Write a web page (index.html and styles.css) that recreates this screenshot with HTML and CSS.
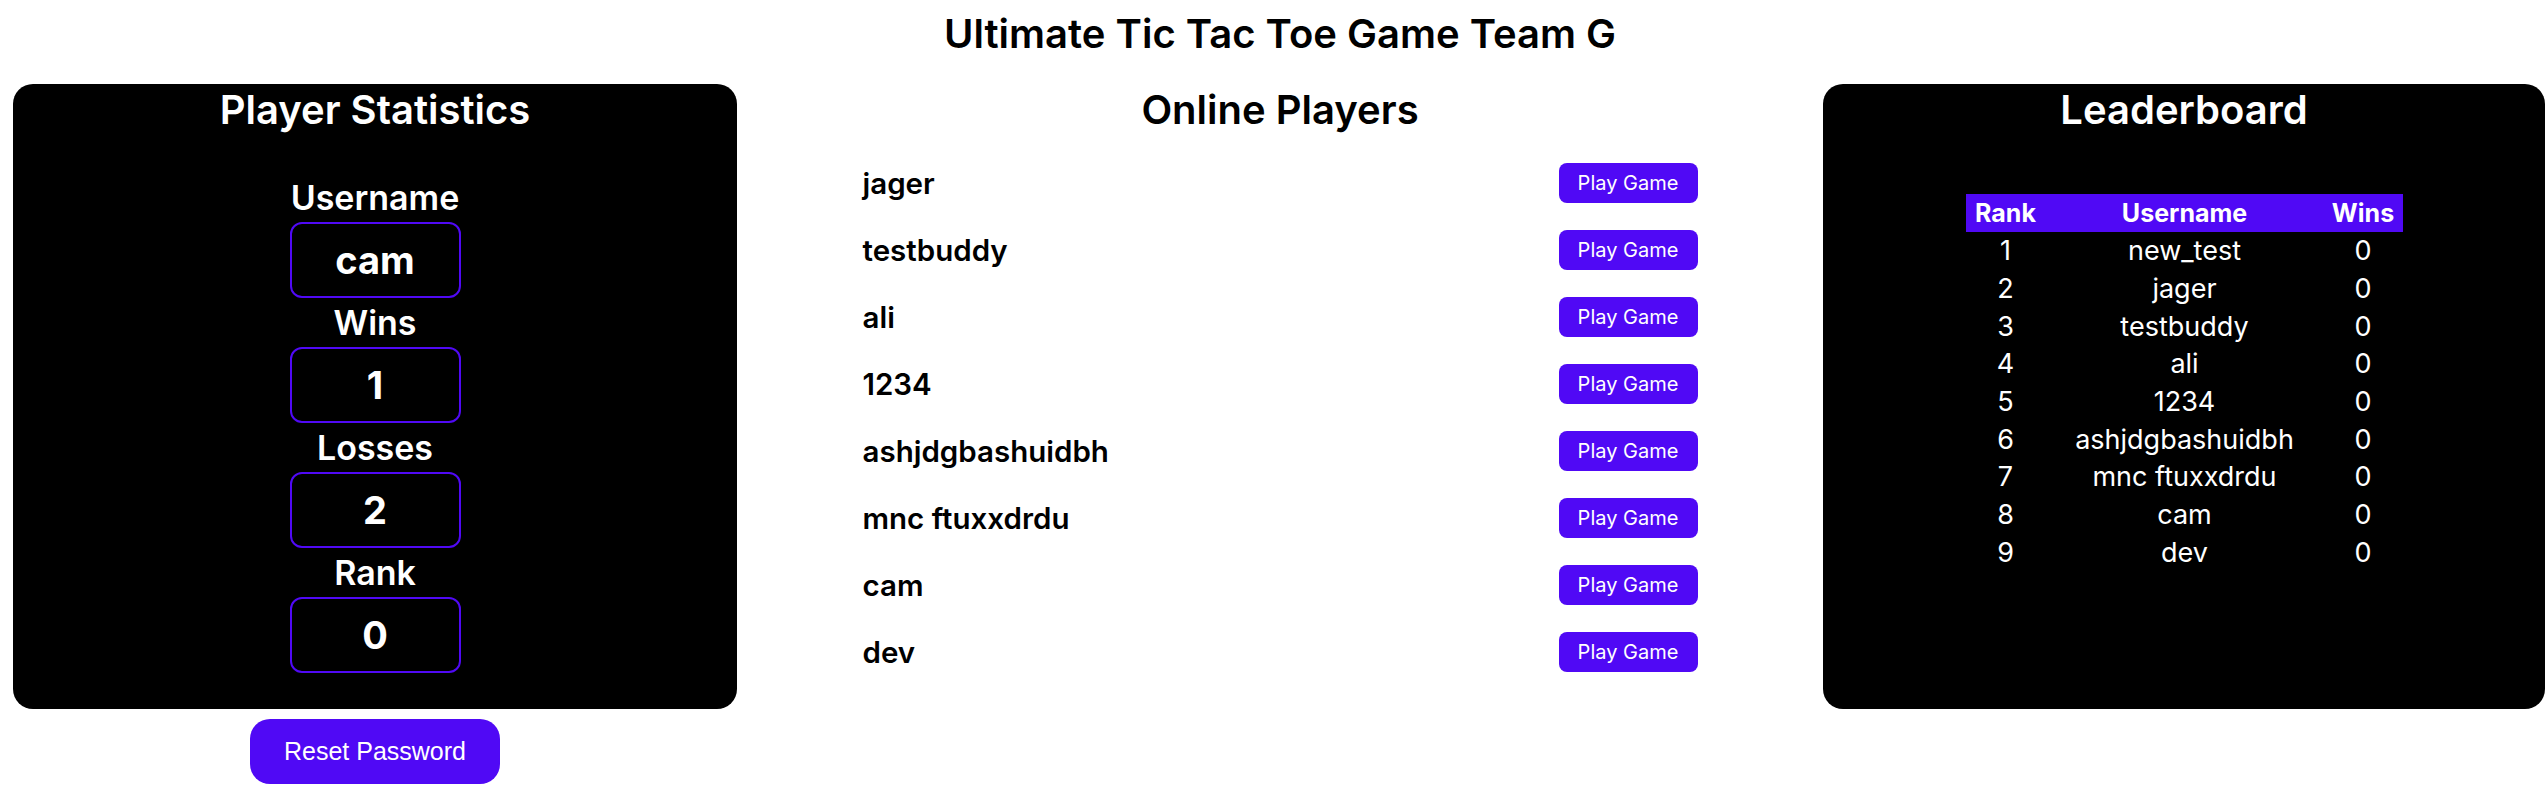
FILE: index.html
```html
<!DOCTYPE html>
<html lang="en">
<head>
<meta charset="utf-8">
<title>Ultimate Tic Tac Toe Game Team G</title>
<link rel="stylesheet" href="styles.css">
</head>
<body>
<h1 class="title">Ultimate Tic Tac Toe Game Team G</h1>
<main class="layout">
  <section class="panel stats">
    <h2 class="panel-title">Player Statistics</h2>
    <div class="stat-list">
      <div class="stat-label">Username</div>
      <div class="stat-box">cam</div>
      <div class="stat-label">Wins</div>
      <div class="stat-box">1</div>
      <div class="stat-label">Losses</div>
      <div class="stat-box">2</div>
      <div class="stat-label">Rank</div>
      <div class="stat-box">0</div>
    </div>
  </section>

  <section class="online">
    <h2 class="panel-title dark">Online Players</h2>
    <ul class="player-list">
      <li class="player-row"><span class="player-name">jager</span><button class="play-btn">Play Game</button></li>
      <li class="player-row"><span class="player-name">testbuddy</span><button class="play-btn">Play Game</button></li>
      <li class="player-row"><span class="player-name">ali</span><button class="play-btn">Play Game</button></li>
      <li class="player-row"><span class="player-name">1234</span><button class="play-btn">Play Game</button></li>
      <li class="player-row"><span class="player-name">ashjdgbashuidbh</span><button class="play-btn">Play Game</button></li>
      <li class="player-row"><span class="player-name">mnc ftuxxdrdu</span><button class="play-btn">Play Game</button></li>
      <li class="player-row"><span class="player-name">cam</span><button class="play-btn">Play Game</button></li>
      <li class="player-row"><span class="player-name">dev</span><button class="play-btn">Play Game</button></li>
    </ul>
  </section>

  <section class="panel leaderboard">
    <h2 class="panel-title">Leaderboard</h2>
    <table class="board">
      <thead>
        <tr><th class="c-rank">Rank</th><th class="c-user">Username</th><th class="c-wins">Wins</th></tr>
      </thead>
      <tbody>
        <tr><td>1</td><td>new_test</td><td>0</td></tr>
        <tr><td>2</td><td>jager</td><td>0</td></tr>
        <tr><td>3</td><td>testbuddy</td><td>0</td></tr>
        <tr><td>4</td><td>ali</td><td>0</td></tr>
        <tr><td>5</td><td>1234</td><td>0</td></tr>
        <tr><td>6</td><td>ashjdgbashuidbh</td><td>0</td></tr>
        <tr><td>7</td><td>mnc ftuxxdrdu</td><td>0</td></tr>
        <tr><td>8</td><td>cam</td><td>0</td></tr>
        <tr><td>9</td><td>dev</td><td>0</td></tr>
      </tbody>
    </table>
  </section>

  <button class="reset-btn">Reset Password</button>
</main>
</body>
</html>
```
FILE: styles.css
```css
* { box-sizing: border-box; }

body {
  margin: 0;
  background: #ffffff;
  color: #000000;
  font-family: Inter, "DejaVu Sans", sans-serif;
}

.title {
  margin: 10px 0 0;
  padding-left: 15px;
  font-size: 40px;
  line-height: 48px;
  font-weight: 600;
  text-align: center;
}

.layout {
  display: grid;
  grid-template-columns: 724px 835px 722px;
  grid-template-rows: auto auto;
  column-gap: 125.5px;
  padding-left: 13px;
  margin-top: 26px;
}

.panel {
  background: #000000;
  color: #ffffff;
  border-radius: 20px;
  padding-top: 2px;
  display: flex;
  flex-direction: column;
  align-items: center;
}

.stats { grid-column: 1; grid-row: 1; padding-bottom: 36px; }
.online { grid-column: 2; grid-row: 1; padding-top: 2px; }
.leaderboard { grid-column: 3; grid-row: 1; }

.panel-title {
  margin: 0;
  font-size: 40px;
  line-height: 48px;
  font-weight: 600;
  text-align: center;
}

.panel-title.dark { color: #000000; }

.stat-list {
  margin-top: 46px;
  display: flex;
  flex-direction: column;
  align-items: center;
}

.stat-label {
  font-size: 34px;
  line-height: 36px;
  font-weight: 600;
  margin-bottom: 6px;
}

.stat-box {
  width: 171px;
  height: 76px;
  border: 2px solid #5009f5;
  border-radius: 12px;
  display: flex;
  align-items: center;
  justify-content: center;
  font-size: 38px;
  font-weight: 700;
  margin-bottom: 7px;
}

.stat-box:last-child { margin-bottom: 0; }

.player-list {
  list-style: none;
  margin: 29px 0 0;
  padding: 0;
  display: flex;
  flex-direction: column;
  gap: 27px;
}

.player-row {
  display: flex;
  align-items: center;
  justify-content: space-between;
  height: 40px;
}

.player-name {
  font-size: 29.5px;
  font-weight: 600;
}

.play-btn {
  width: 139px;
  height: 40px;
  border: none;
  border-radius: 8px;
  background: #5009f5;
  color: #ffffff;
  font-family: Inter, "DejaVu Sans", sans-serif;
  font-size: 20px;
  font-weight: 400;
  padding: 0;
}

.board {
  margin-top: 60px;
  border-collapse: collapse;
  width: 437px;
  table-layout: fixed;
  font-size: 25px;
}

.board th {
  background: #5009f5;
  height: 38px;
  padding: 0;
  font-weight: 700;
  text-align: center;
}

.board td {
  height: 37.7px;
  padding: 0;
  text-align: center;
  font-size: 27px;
  font-weight: 400;
}

.c-rank { width: 80px; }
.c-user { width: 278px; }
.c-wins { width: 79px; }

.reset-btn {
  grid-column: 1;
  grid-row: 2;
  justify-self: center;
  margin-top: 10px;
  width: 250px;
  height: 65px;
  border: none;
  border-radius: 20px;
  background: #5009f5;
  color: #ffffff;
  font-family: "Liberation Sans", Arial, sans-serif;
  font-size: 25px;
  padding: 0;
}
```
